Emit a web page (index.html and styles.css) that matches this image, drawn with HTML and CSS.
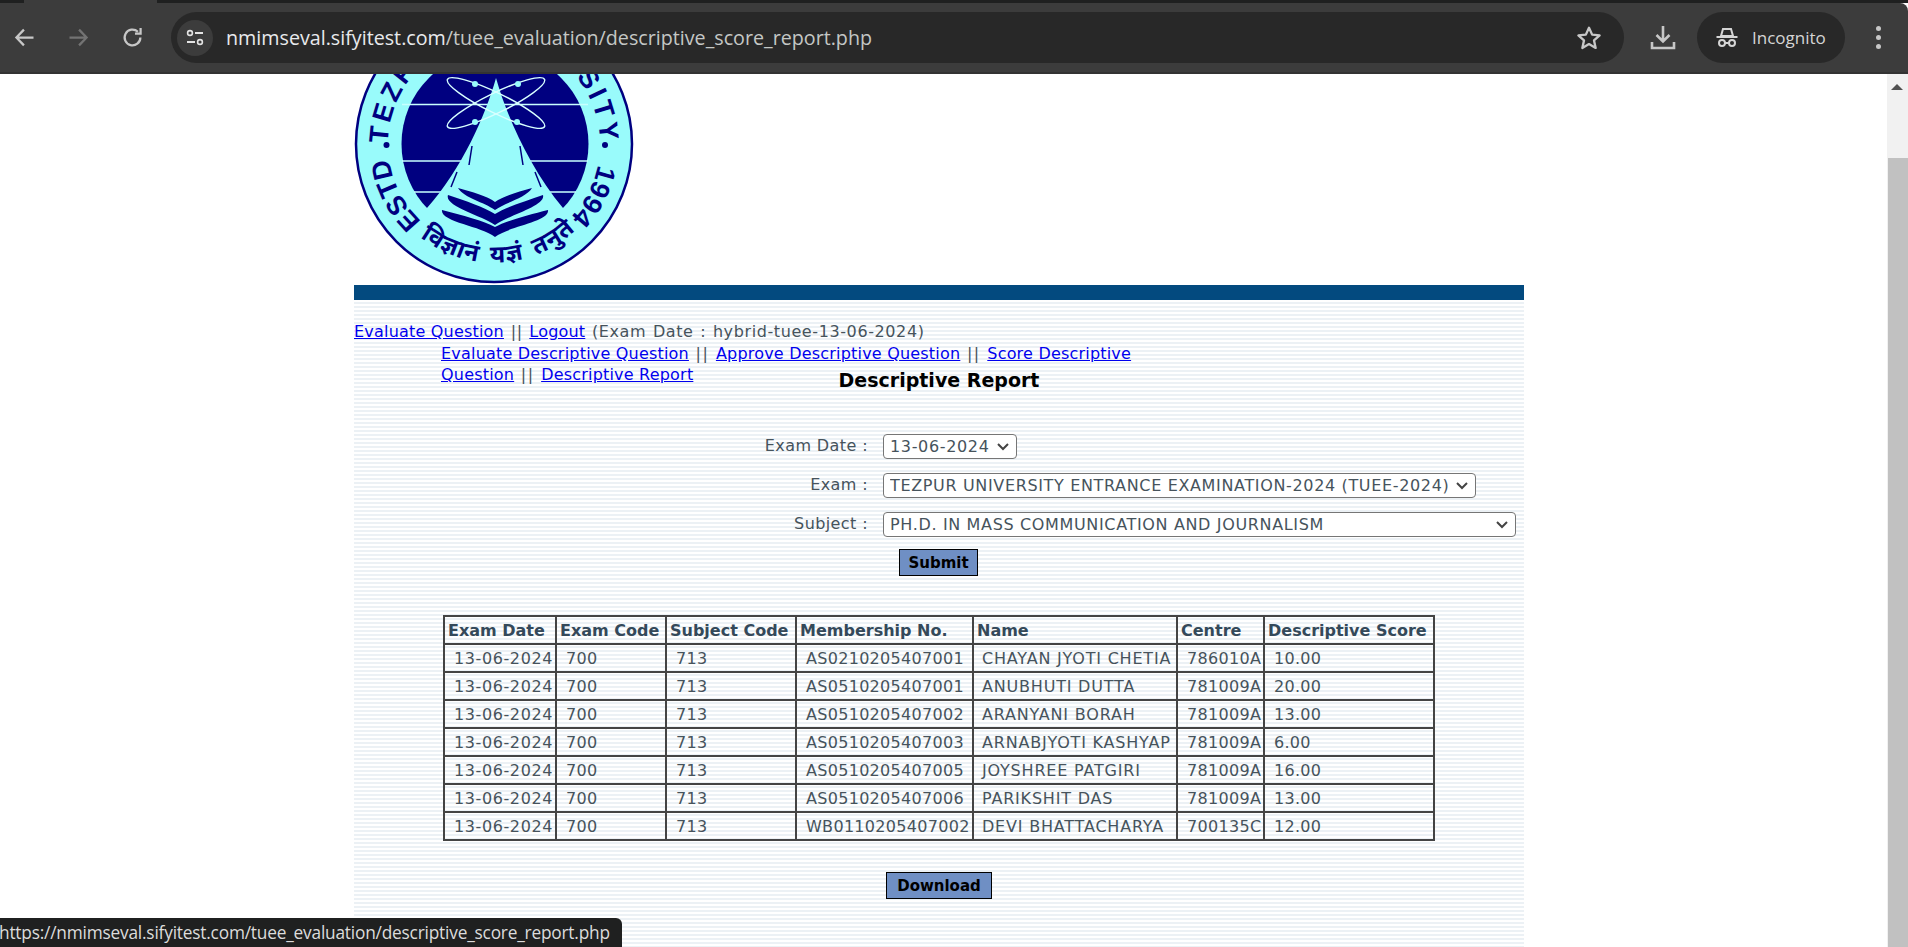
FILE: index.html
```html
<!DOCTYPE html>
<html lang="en">
<head>
    <meta charset="UTF-8">
    <meta name="viewport" content="width=device-width, initial-scale=1.0">
    <title>Descriptive Report</title>
    <link rel="stylesheet" href="styles.css">
</head>
<body>
    <div class="tabstrip"><div class="tab"></div></div>
    <div class="toolbar">
        <svg class="tool-icon" viewBox="0 0 24 24"><path d="M20 12H5M11.5 5L4.8 12l6.7 7" fill="none" stroke="#c7c7c7" stroke-width="2"/></svg>
        <svg class="tool-icon" viewBox="0 0 24 24"><path d="M4 12h15M12.5 5l6.7 7-6.7 7" fill="none" stroke="#737373" stroke-width="2"/></svg>
        <svg class="tool-icon" viewBox="0 0 24 24"><path d="M19 12a7 7 0 1 1-2.2-5.1M19.2 3.5v5h-5" fill="none" stroke="#c7c7c7" stroke-width="2"/></svg>
        <div class="omnibox">
            <span class="site-chip">
                <svg viewBox="0 0 20 20" width="20" height="20"><circle cx="5" cy="5" r="2.4" fill="none" stroke="#e3e3e3" stroke-width="1.6"/><path d="M10 5h8M2 14h8" stroke="#e3e3e3" stroke-width="2"/><circle cx="15" cy="14" r="2.4" fill="none" stroke="#e3e3e3" stroke-width="1.6"/></svg>
            </span>
            <span class="url"><b>nmimseval.sifyitest.com</b>/tuee_evaluation/descriptive_score_report.php</span>
            <svg class="star" viewBox="0 0 24 24"><path d="M12 3.2l2.7 5.9 6.4.7-4.8 4.3 1.4 6.4L12 17.2l-5.7 3.3 1.4-6.4-4.8-4.3 6.4-.7z" fill="none" stroke="#c7c7c7" stroke-width="2" stroke-linejoin="round"/></svg>
        </div>
        <svg class="download" viewBox="0 0 26 26"><path d="M13 1v15M6.5 10l6.5 6.5 6.5-6.5" fill="none" stroke="#c7c7c7" stroke-width="2.6"/><path d="M2 17v6h22v-6" fill="none" stroke="#c7c7c7" stroke-width="2.6"/></svg>
        <div class="incognito">
            <svg viewBox="0 0 24 24" width="24" height="24"><path d="M6 10l2-7h8l2 7z" fill="none" stroke="#d5d5d5" stroke-width="2"/><path d="M1.5 11h21" stroke="#d5d5d5" stroke-width="2"/><circle cx="7" cy="17" r="3" fill="none" stroke="#d5d5d5" stroke-width="2"/><circle cx="17" cy="17" r="3" fill="none" stroke="#d5d5d5" stroke-width="2"/><path d="M10 17h4" stroke="#d5d5d5" stroke-width="2"/></svg>
            <span>Incognito</span>
        </div>
        <div class="kebab"><i></i><i></i><i></i></div>
    </div>

    <div class="viewport">
        <div class="page">
            <div class="column">
                <svg class="logo" viewBox="0 0 280 211" width="280" height="211">
                    <defs>
                        <path id="ring-arc" d="M 71.9 151.2 A 106 106 0 1 1 208.1 151.2"/>
                        <path id="motto-arc" d="M 30 115 A 119 119 0 0 0 250 115"/>
                    </defs>
                    <circle cx="140" cy="70" r="138" fill="#99fbfb" stroke="#000080" stroke-width="2.5"/>
                    <circle cx="141" cy="70" r="93.5" fill="#000080"/>
                    <path d="M48 30.5h186M48 87h186M60 118h162" stroke="#c8ffff" stroke-width="1.6"/>
                    <path d="M142 4C132 40 108 95 73 134L73 172H209V134C176 95 152 40 142 4Z" fill="#99fbfb"/>
                    <g fill="none" stroke="#d8ffff" stroke-width="1.4">
                        <ellipse cx="142" cy="29" rx="54" ry="10" transform="rotate(26 142 29)"/>
                        <ellipse cx="142" cy="29" rx="54" ry="10" transform="rotate(-26 142 29)"/>
                        <path d="M118 72l-3 19M103 98l-6 15M166 72l3 19M181 98l6 15" stroke="#000080" stroke-width="1.5"/>
                    </g>
                    <g fill="#99fbfb">
                        <circle cx="121" cy="10" r="3"/><circle cx="164" cy="10" r="3"/>
                        <circle cx="121" cy="48" r="3"/><circle cx="163" cy="48" r="3"/>
                    </g>
                    <g fill="#000080">
                        <path d="M104 114C118 118 133 122 141 128C149 122 164 118 178 114C172 124 152 128 141 136C130 128 110 124 104 114Z"/>
                        <path d="M94 121C112 127 130 133 141 140C152 133 172 127 189 121C192 132 155 141 141 151C127 141 90 132 94 121Z"/>
                        <path d="M88 136C108 141 130 147 141 153C152 147 174 141 194 136C196 148 155 152 141 163C127 152 86 148 88 136Z"/>
                        <circle cx="32.5" cy="71" r="3"/>
                        <circle cx="251" cy="71" r="3"/>
                    </g>
                    <text class="logo-ring"><textPath href="#ring-arc" startOffset="42" text-anchor="middle">ESTD</textPath></text>
                    <text class="logo-ring logo-name"><textPath href="#ring-arc" startOffset="259" text-anchor="middle">TEZPUR UNIVERSITY</textPath></text>
                    <text class="logo-ring"><textPath href="#ring-arc" startOffset="476" text-anchor="middle">1994</textPath></text>
                    <text class="logo-motto"><textPath href="#motto-arc" startOffset="52%" text-anchor="middle">विज्ञानं यज्ञं तनुते</textPath></text>
                </svg>
                <div class="bar"></div>

                <div class="content">
                    <div class="nav-main">
                        <a href="#">Evaluate Question</a> || <a href="#">Logout</a> (Exam Date : hybrid-tuee-13-06-2024)
                    </div>
                    <div class="nav-sub">
                        <a href="#">Evaluate Descriptive Question</a> || <a href="#">Approve Descriptive Question</a> || <a href="#">Score Descriptive Question</a> || <a href="#">Descriptive Report</a>
                    </div>
                    <h1 class="title">Descriptive Report</h1>

                    <form class="filters">
                        <label>Exam Date :</label>
                        <select class="sel-date"><option>13-06-2024</option></select>
                        <label>Exam :</label>
                        <select class="sel-exam"><option>TEZPUR UNIVERSITY ENTRANCE EXAMINATION-2024 (TUEE-2024)</option></select>
                        <label>Subject :</label>
                        <select class="sel-subject"><option>PH.D. IN MASS COMMUNICATION AND JOURNALISM</option></select>
                        <button type="button" class="btn btn-submit">Submit</button>
                    </form>

                    <table class="report">
                        <thead>
                            <tr><th>Exam Date</th><th>Exam Code</th><th>Subject Code</th><th>Membership No.</th><th>Name</th><th>Centre</th><th>Descriptive Score</th></tr>
                        </thead>
                        <tbody>
                            <tr><td>13-06-2024</td><td>700</td><td>713</td><td>AS0210205407001</td><td>CHAYAN JYOTI CHETIA</td><td>786010A</td><td>10.00</td></tr>
                            <tr><td>13-06-2024</td><td>700</td><td>713</td><td>AS0510205407001</td><td>ANUBHUTI DUTTA</td><td>781009A</td><td>20.00</td></tr>
                            <tr><td>13-06-2024</td><td>700</td><td>713</td><td>AS0510205407002</td><td>ARANYANI BORAH</td><td>781009A</td><td>13.00</td></tr>
                            <tr><td>13-06-2024</td><td>700</td><td>713</td><td>AS0510205407003</td><td>ARNABJYOTI KASHYAP</td><td>781009A</td><td>6.00</td></tr>
                            <tr><td>13-06-2024</td><td>700</td><td>713</td><td>AS0510205407005</td><td>JOYSHREE PATGIRI</td><td>781009A</td><td>16.00</td></tr>
                            <tr><td>13-06-2024</td><td>700</td><td>713</td><td>AS0510205407006</td><td>PARIKSHIT DAS</td><td>781009A</td><td>13.00</td></tr>
                            <tr><td>13-06-2024</td><td>700</td><td>713</td><td>WB0110205407002</td><td>DEVI BHATTACHARYA</td><td>700135C</td><td>12.00</td></tr>
                        </tbody>
                    </table>

                    <div class="download-row"><button type="button" class="btn btn-download">Download</button></div>
                </div>
            </div>
        </div>
        <div class="scrollbar">
            <div class="arrow"></div>
            <div class="thumb"></div>
        </div>
        <div class="status">https://nmimseval.sifyitest.com/tuee_evaluation/descriptive_score_report.php</div>
    </div>
</body>
</html>
```

FILE: styles.css
```css
html, body {
    margin: 0;
    height: 100%;
    overflow: hidden;
}
body {
    background: #fff;
    font-family: "DejaVu Sans", Verdana, sans-serif;
    color: #46535c;
}

/* browser chrome */
.tabstrip {
    height: 3px;
    background: #1f2020;
}
.tab {
    width: 133px;
    height: 3px;
    margin-left: 24px;
    background: #3c3c3c;
}
.toolbar {
    height: 69px;
    background: #3c3c3c;
    border-bottom: 2px solid #333;
    border-top-right-radius: 8px;
    display: flex;
    align-items: center;
    font-family: "Open Sans", sans-serif;
}
.tool-icon {
    width: 27px;
    height: 27px;
    margin-left: 27px;
}
.tool-icon:first-child {
    margin-left: 11px;
}
.omnibox {
    width: 1453px;
    height: 51px;
    margin-left: 25px;
    background: #282828;
    border-radius: 26px;
    display: flex;
    align-items: center;
}
.site-chip {
    width: 36px;
    height: 36px;
    margin-left: 6px;
    border-radius: 50%;
    background: #3c3c3c;
    display: flex;
    align-items: center;
    justify-content: center;
}
.url {
    margin-left: 13px;
    font-size: 19.7px;
    color: #c4c7c5;
}
.url b {
    font-weight: 400;
    color: #e8eaed;
}
.star {
    width: 28px;
    height: 28px;
    margin-left: auto;
    margin-right: 21px;
}
.download {
    width: 26px;
    height: 26px;
    margin-left: 26px;
}
.incognito {
    width: 148px;
    height: 51px;
    margin-left: 21px;
    background: #282828;
    border-radius: 26px;
    display: flex;
    align-items: center;
    gap: 13px;
    padding-left: 18px;
    box-sizing: border-box;
    color: #d5d5d5;
    font-size: 17px;
}
.kebab {
    margin-left: 31px;
    display: flex;
    flex-direction: column;
    gap: 4px;
}
.kebab i {
    width: 5px;
    height: 5px;
    border-radius: 50%;
    background: #c7c7c7;
}

/* page */
.viewport {
    position: relative;
    display: flex;
    height: 873px;
    overflow: hidden;
}
.page {
    flex: 1;
    padding-left: 354px;
}
.column {
    width: 1170px;
}
.logo {
    display: block;
}
.logo-ring {
    font: bold 27px "Liberation Sans", sans-serif;
    fill: #000080;
}
.logo-name {
    letter-spacing: 3.2px;
}
.logo-motto {
    font: bold 24px "Noto Sans", "Noto Sans Devanagari", sans-serif;
    letter-spacing: 1px;
    word-spacing: 5px;
    fill: #000080;
}
.bar {
    height: 15px;
    background: #034a7f;
}
.content {
    padding-top: 22px;
    height: 700px;
    background: repeating-linear-gradient(180deg, #fff 0, #fff 2px, #ecf1f5 2px, #ecf1f5 4px);
}
.nav-main {
    font-size: 16px;
    line-height: 20px;
    letter-spacing: 0.6px;
    word-spacing: 1px;
}
.nav-main a {
    letter-spacing: 0.2px;
    word-spacing: 0;
}
.nav-sub {
    width: 700px;
    margin-top: 1px;
    margin-left: 87px;
    font-size: 16px;
    line-height: 21px;
    letter-spacing: 1.5px;
}
.nav-sub a {
    letter-spacing: 0.2px;
}
.title {
    margin: -18px 0 0;
    font-size: 19px;
    line-height: 26px;
    text-align: center;
    color: #000;
}

/* filters */
.filters {
    display: grid;
    grid-template-columns: 514px auto;
    column-gap: 15px;
    row-gap: 14px;
    margin-top: 41px;
    justify-items: start;
    align-items: center;
}
.filters label {
    justify-self: end;
    margin-bottom: 2px;
    font-size: 16px;
    letter-spacing: 0.4px;
}
.filters select {
    appearance: none;
    height: 25px;
    padding: 0 0 0 6px;
    font: 16px "DejaVu Sans", Verdana, sans-serif;
    letter-spacing: 0.65px;
    color: #46535c;
    background: #fff url("data:image/svg+xml,%3Csvg xmlns='http://www.w3.org/2000/svg' width='12' height='8'%3E%3Cpath d='M1 1l5 5 5-5' fill='none' stroke='%23444' stroke-width='2'/%3E%3C/svg%3E") no-repeat right 7px center;
    border: 1px solid #767676;
    border-radius: 4px;
}
.sel-date { width: 134px; }
.sel-exam { width: 593px; }
.sel-subject { width: 633px; }
.btn {
    background: #6f8fc4;
    border: 1px solid #000;
    color: #000;
    font: bold 15px "DejaVu Sans", Verdana, sans-serif;
    padding: 0;
    height: 27px;
}
.btn-submit {
    grid-column: 2;
    width: 79px;
    margin-left: 16px;
    margin-top: -2px;
}
.btn-download {
    width: 106px;
}
.download-row {
    margin-top: 31px;
    text-align: center;
}

/* table */
.report {
    margin: 39px 0 0 89px;
    width: 992px;
    table-layout: fixed;
    border-collapse: collapse;
    border: 2px solid #444;
    font-size: 16px;
}
.report th, .report td {
    box-sizing: border-box;
    border: 2px solid #444;
    height: 28px;
    padding: 0;
    white-space: nowrap;
    overflow: hidden;
    text-align: left;
}
.report th {
    padding-left: 3px;
    font-weight: bold;
    color: #34495a;
}
.report td {
    padding-left: 9px;
    letter-spacing: 0.3px;
}
.report td:nth-child(1) { letter-spacing: 0.6px; }
.report td:nth-child(5) { letter-spacing: 0.8px; padding-left: 8px; }
.report th:nth-child(1) { width: 112px; }
.report th:nth-child(2) { width: 110px; }
.report th:nth-child(3) { width: 130px; }
.report th:nth-child(4) { width: 177px; }
.report th:nth-child(5) { width: 204px; }
.report th:nth-child(6) { width: 87px; }

/* scrollbar and status bubble */
.scrollbar {
    width: 21px;
    background: #f1f1f1;
    display: flex;
    flex-direction: column;
    align-items: flex-end;
}
.arrow {
    width: 0;
    height: 0;
    margin: 10px 5px 0 0;
    border-left: 6px solid transparent;
    border-right: 6px solid transparent;
    border-bottom: 6px solid #505050;
}
.thumb {
    width: 20px;
    flex: 1;
    margin-top: 68px;
    background: #c1c1c1;
}
.status {
    position: absolute;
    left: 0;
    bottom: 0;
    width: 622px;
    height: 29px;
    box-sizing: border-box;
    background: #1f2020;
    border-top-right-radius: 6px;
    color: #dcdcdc;
    font: 17.3px/29px "Open Sans", sans-serif;
    letter-spacing: -0.2px;
    text-indent: -1px;
    white-space: nowrap;
}
```
